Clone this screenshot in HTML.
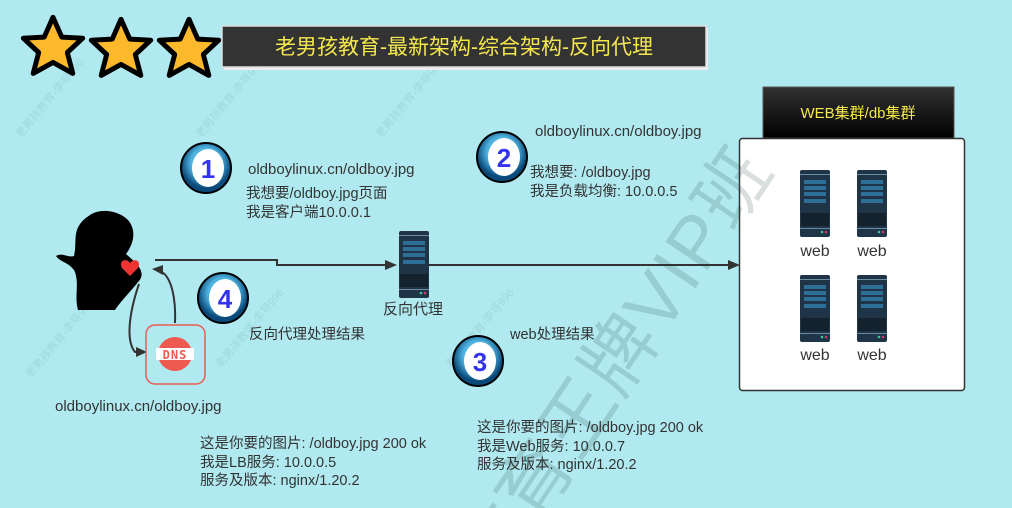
<!DOCTYPE html>
<html style="overflow:hidden;width:1012px;height:508px"><head><meta charset="utf-8"><style>
html,body{margin:0;padding:0}
body{width:1012px;height:508px;overflow:hidden;background:#b0eaf0;position:relative;font-family:"Liberation Sans","Noto Sans CJK SC",sans-serif;color:#333}
.clip{position:absolute;left:0;top:0;width:1012px;height:508px;overflow:hidden}
.t{position:absolute;font-size:14.5px;line-height:19px;white-space:nowrap}
.wm{position:absolute;color:rgba(30,60,60,0.17);font-size:74px;white-space:nowrap;transform-origin:0 0;transform:rotate(-56deg);left:295px;top:730px;letter-spacing:2px}
.sm{position:absolute;color:#9fd8dc;font-size:11px;white-space:nowrap;transform:rotate(-50deg)}
</style></head><body>
<div class="clip">
<svg width="0" height="0" style="position:absolute"><defs>
<g id="srv"><rect x="0" y="0" width="30" height="67" rx="2" fill="#1f3446"/><rect x="0" y="4" width="30" height="1" fill="#6a8ba0"/>
<rect x="4" y="10" width="22" height="4" fill="#2e6f97"/><rect x="4" y="16" width="22" height="4" fill="#2e6f97"/><rect x="4" y="22" width="22" height="4" fill="#2e6f97"/><rect x="4" y="29" width="22" height="4" fill="#2e6f97"/>
<rect x="1" y="43" width="28" height="13" fill="#14222e"/><rect x="0" y="58" width="30" height="1" fill="#6a8ba0"/>
<circle cx="22" cy="62" r="1.3" fill="#3c9"/><circle cx="26" cy="62" r="1.3" fill="#d36"/></g>
<radialGradient id="bg" cx="0.5" cy="0.4"><stop offset="0.6" stop-color="#4fb3e0"/><stop offset="1" stop-color="#0a4a7a"/></radialGradient>
<g id="star"><path d="M30 3 L38 21 L57 22 L43 35 L48 54 L30 44 L12 54 L17 35 L3 22 L22 21 Z" fill="#fdb92c" stroke="#000" stroke-width="4.5" stroke-linejoin="round"/></g>
</defs></svg>

<div class="sm" style="left:0;top:90px">老男孩教育-李导996</div>
<div class="sm" style="left:180px;top:90px">老男孩教育-李导996</div>
<div class="sm" style="left:360px;top:90px">老男孩教育-李导996</div>
<div class="sm" style="left:10px;top:330px">老男孩教育-李导996</div>
<div class="sm" style="left:200px;top:320px">老男孩教育-李导996</div>
<div class="sm" style="left:430px;top:320px">老男孩教育-李导996</div>

<svg style="position:absolute;left:0;top:0" width="1012" height="508">
<g transform="translate(20,14) scale(1.1)"><use href="#star"/></g>
<g transform="translate(88,16) scale(1.1)"><use href="#star"/></g>
<g transform="translate(156,16) scale(1.1)"><use href="#star"/></g>
<rect x="224" y="28" width="484" height="42" fill="#eee"/>
<rect x="222" y="26" width="484" height="41" fill="#333" stroke="#ddd" stroke-width="1.5"/>
<text x="464" y="54" text-anchor="middle" fill="#f5e84c" font-size="21" font-family="Liberation Sans,Noto Sans CJK SC,sans-serif">老男孩教育-最新架构-综合架构-反向代理</text>
<g font-family="Liberation Sans,DejaVu Sans,sans-serif" font-weight="bold" font-size="26" fill="#3333ee" text-anchor="middle">
<circle cx="206" cy="168" r="25" fill="url(#bg)" stroke="#000" stroke-width="2"/><ellipse cx="208" cy="168" rx="16" ry="19" fill="#fff"/><text x="208" y="178">1</text>
<circle cx="502" cy="157" r="25" fill="url(#bg)" stroke="#000" stroke-width="2"/><ellipse cx="504" cy="157" rx="16" ry="19" fill="#fff"/><text x="504" y="167">2</text>
<circle cx="478" cy="361" r="25" fill="url(#bg)" stroke="#000" stroke-width="2"/><ellipse cx="480" cy="361" rx="16" ry="19" fill="#fff"/><text x="480" y="371">3</text>
<circle cx="223" cy="298" r="25" fill="url(#bg)" stroke="#000" stroke-width="2"/><ellipse cx="225" cy="298" rx="16" ry="19" fill="#fff"/><text x="225" y="308">4</text>
</g>
<path d="M155 260 H277 V265 H390" fill="none" stroke="#333" stroke-width="2"/>
<path d="M397 265 l-12 -5 v10z" fill="#333"/>
<path d="M428 265 H730" fill="none" stroke="#333" stroke-width="2"/>
<path d="M740 265 l-12 -5 v10z" fill="#333"/>
<path d="M139 284 C130 310,125 340,135 352 L145 352" fill="none" stroke="#333" stroke-width="2"/>
<path d="M147 352 l-11 -5 v10z" fill="#333"/>
<path d="M175 323 C176 300,172 276,160 271" fill="none" stroke="#333" stroke-width="2"/>
<path d="M152 269 l11 -4 v10z" fill="#333"/>
<path d="M90 215 C100 208,118 210,128 220 C138 232,132 246,126 254 C135 262,148 272,138 282 C132 290,120 302,115 310 L78 310 C74 296,80 282,74 270 C68 262,60 262,56 256 C62 252,68 258,74 256 C78 240,70 228,90 215Z" fill="#000"/>
<path d="M130 263 c-4 -6 -12 -2 -8 5 l8 8 l8 -8 c4 -7 -4 -11 -8 -5z" fill="#e33"/>
<rect x="146" y="325" width="59" height="59" rx="9" fill="none" stroke="#ee5a50" stroke-width="1.5"/>
<circle cx="175" cy="354" r="17" fill="#ee5a50"/>
<rect x="156" y="348" width="38" height="12" fill="#fff"/>
<text x="175" y="359" text-anchor="middle" font-size="12" font-weight="bold" fill="#ee5a50" font-family="DejaVu Sans Mono,monospace" letter-spacing="1">DNS</text>
<use href="#srv" x="399" y="231"/>
<linearGradient id="hg" x1="0" y1="0" x2="0" y2="1"><stop offset="0" stop-color="#333"/><stop offset="1" stop-color="#000"/></linearGradient>
<rect x="763" y="87" width="191" height="51" fill="url(#hg)" stroke="#555"/>
<text x="858" y="118" text-anchor="middle" fill="#f5e84c" font-size="15" font-family="Liberation Sans,Noto Sans CJK SC,sans-serif">WEB集群/db集群</text>
<rect x="739.5" y="138.5" width="225" height="252" rx="3" fill="#fff" stroke="#333" stroke-width="1.5"/>
<use href="#srv" x="800" y="170"/><use href="#srv" x="857" y="170"/><use href="#srv" x="800" y="275"/><use href="#srv" x="857" y="275"/>
<g font-size="16" fill="#333" text-anchor="middle" font-family="Liberation Sans,sans-serif">
<text x="815" y="256">web</text><text x="872" y="256">web</text><text x="815" y="360">web</text><text x="872" y="360">web</text></g>
</svg>

<div class="wm">老男孩教育王牌VIP班</div>

<div class="t" style="left:248px;top:160px;font-size:15px">oldboylinux.cn/oldboy.jpg</div>
<div class="t" style="left:246px;top:185px">我想要/oldboy.jpg页面<br>我是客户端10.0.0.1</div>
<div class="t" style="left:535px;top:122px;font-size:15px">oldboylinux.cn/oldboy.jpg</div>
<div class="t" style="left:530px;top:164px">我想要: /oldboy.jpg<br>我是负载均衡: 10.0.0.5</div>
<div class="t" style="left:383px;top:300px;font-size:15px">反向代理</div>
<div class="t" style="left:249px;top:326px">反向代理处理结果</div>
<div class="t" style="left:510px;top:326px">web处理结果</div>
<div class="t" style="left:55px;top:397px;font-size:15px">oldboylinux.cn/oldboy.jpg</div>
<div class="t" style="left:200px;top:435px;line-height:18.5px">这是你要的图片: /oldboy.jpg 200 ok<br>我是LB服务: 10.0.0.5<br>服务及版本: nginx/1.20.2</div>
<div class="t" style="left:477px;top:419px;line-height:18.5px">这是你要的图片: /oldboy.jpg 200 ok<br>我是Web服务: 10.0.0.7<br>服务及版本: nginx/1.20.2</div>
</div>
</body></html>
